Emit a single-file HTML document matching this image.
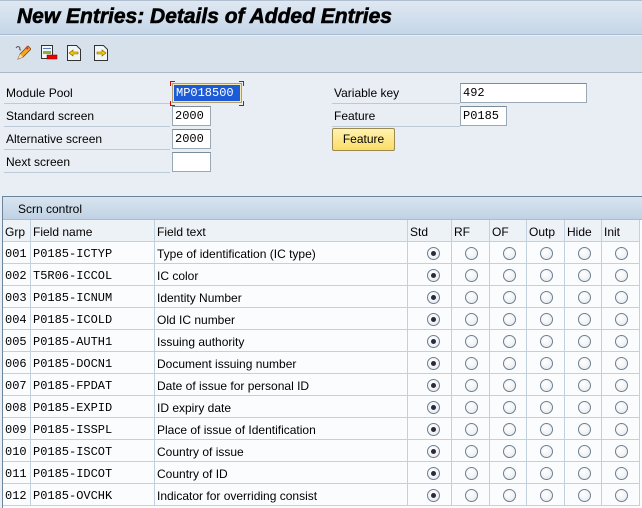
<!DOCTYPE html>
<html><head><meta charset="utf-8"><style>
*{margin:0;padding:0;box-sizing:border-box}
body{width:642px;height:508px;overflow:hidden;background:#e9eef5;font-family:"Liberation Sans",Tahoma,sans-serif;font-size:12px;color:#000;position:relative}
.a{position:absolute}
.title{left:0;top:0;width:642px;height:35px;background:linear-gradient(#dfe8f2,#c5d6e8);border-top:1px solid #b0c0d0;border-bottom:1px solid #a8bcd2}
.title span{position:absolute;left:17px;top:4px;font-size:21px;font-weight:900;font-style:italic;letter-spacing:0;-webkit-text-stroke:0.6px #000}
.tb{left:0;top:36px;width:642px;height:37px;background:#d6e1ec;border-bottom:1px solid #a9b9c9}
.lbl{position:absolute;height:22px;line-height:22px;padding-left:2px;border-bottom:1px solid #bccad8}
.inp{position:absolute;height:20px;background:#fff;border:1px solid #9aa8b6;border-top-color:#7d8b99;font-family:"Liberation Mono",monospace;font-size:12px;line-height:18px;padding-left:2px}
.btn{position:absolute;left:332px;top:128px;width:63px;height:23px;background:linear-gradient(#fff3b0,#fbdc66);border:1px solid #9a8a50;border-radius:2px;text-align:center;line-height:21px}
.grid{left:2px;top:196px;width:640px;height:312px;border-left:1px solid #6d859c;border-top:1px solid #6d859c;background:#fbfcfe}
.hd{left:3px;top:197px;width:639px;height:23px;background:linear-gradient(#d9e5f0,#bfd2e4);border-bottom:1px solid #a9bccf}
.cell{position:absolute;height:22px;line-height:22px;padding-left:2px;border-right:1px solid #c3d0dd;border-bottom:1px solid #c3d0dd;white-space:nowrap;overflow:hidden}
.ch{background:#edf2f7}
.m{font-family:"Liberation Mono",monospace;font-size:12px}
.r{position:absolute;width:13px;height:13px;border-radius:50%;border:1px solid #6f7f8f;background:radial-gradient(circle at 40% 35%,#fff,#e4e9ee)}
.r.on::after{content:"";position:absolute;left:3px;top:3px;width:5px;height:5px;border-radius:50%;background:#2a2a3a}
.k{position:absolute;width:5px;height:5px;border-color:#d00;border-style:solid;border-width:0}
</style></head><body>
<div class="a title"><span>New Entries: Details of Added Entries</span></div>
<div class="a tb">
<svg class="a" style="left:13px;top:8px" width="18" height="18" viewBox="0 0 18 18"><path d="M3 4 q2-3 4 0 q-1 2 1 2" stroke="#555" fill="none"/><path d="M5 15 l2-5 8-8 3 3-8 8z" fill="#f5a623" stroke="#7a4a10" stroke-width="0.8"/><path d="M5 15 l2-5 3 3z" fill="#f7e0b0"/><path d="M13 3 l2 2" stroke="#d33" stroke-width="2"/></svg>
<svg class="a" style="left:40px;top:8px" width="18" height="18" viewBox="0 0 18 18"><rect x="1.5" y="1.5" width="11" height="13" fill="#f4f6f8" stroke="#333"/><rect x="3" y="4" width="8" height="1" fill="#5a7ab0"/><rect x="3" y="7" width="8" height="3" fill="#8ab040"/><rect x="7" y="11" width="10" height="4" fill="#e00" stroke="#700" stroke-width="0.5"/></svg>
<svg class="a" style="left:66px;top:8px" width="16" height="18" viewBox="0 0 16 18"><path d="M1.5 1.5h9l4 4v11h-13z" fill="#f2f4f6" stroke="#333"/><path d="M3 9l4-3v2h5v2h-5v2z" fill="#f0d000" stroke="#806000" stroke-width="0.6"/></svg>
<svg class="a" style="left:93px;top:8px" width="16" height="18" viewBox="0 0 16 18"><path d="M1.5 1.5h9l4 4v11h-13z" fill="#f2f4f6" stroke="#333"/><path d="M13 9l-4-3v2h-5v2h5v2z" fill="#f0d000" stroke="#806000" stroke-width="0.6"/></svg>
</div>

<div class="lbl" style="left:4px;top:82px;width:166px">Module Pool</div>
<div class="lbl" style="left:4px;top:105px;width:166px">Standard screen</div>
<div class="lbl" style="left:4px;top:128px;width:166px">Alternative screen</div>
<div class="lbl" style="left:4px;top:151px;width:166px">Next screen</div>
<div class="k" style="left:170px;top:81px;border-left-width:1px;border-top-width:1px"></div>
<div class="k" style="left:239px;top:81px;border-right-width:1px;border-top-width:1px"></div>
<div class="k" style="left:170px;top:101px;border-left-width:1px;border-bottom-width:1px"></div>
<div class="k" style="left:239px;top:101px;border-right-width:1px;border-bottom-width:1px"></div>
<div class="inp" style="left:172px;top:83px;width:70px;background:#f5e8b0;border-color:#b0a070;padding:1px"><div style="background:#1c5ad8;color:#fff;height:16px;line-height:16px;padding-left:2px">MP018500</div></div>
<div class="inp" style="left:172px;top:106px;width:39px">2000</div>
<div class="inp" style="left:172px;top:129px;width:39px">2000</div>
<div class="inp" style="left:172px;top:152px;width:39px"></div>

<div class="lbl" style="left:332px;top:82px;width:128px">Variable key</div>
<div class="lbl" style="left:332px;top:105px;width:128px">Feature</div>
<div class="inp" style="left:460px;top:83px;width:127px">492</div>
<div class="inp" style="left:460px;top:106px;width:47px">P0185</div>
<div class="btn">Feature</div>

<div class="a grid"></div>
<div class="a hd"><span style="position:absolute;left:15px;top:5px">Scrn control</span></div>
<div id="t"></div>
<script>
var cols=[[3,28],[31,124],[155,253],[408,44],[452,38],[490,37],[527,38],[565,37],[602,38]];
var hdr=["Grp","Field name","Field text","Std","RF","OF","Outp","Hide","Init"];
var rows=[["001","P0185-ICTYP","Type of identification (IC type)"],["002","T5R06-ICCOL","IC color"],["003","P0185-ICNUM","Identity Number"],["004","P0185-ICOLD","Old IC number"],["005","P0185-AUTH1","Issuing authority"],["006","P0185-DOCN1","Document issuing number"],["007","P0185-FPDAT","Date of issue for personal ID"],["008","P0185-EXPID","ID expiry date"],["009","P0185-ISSPL","Place of issue of Identification"],["010","P0185-ISCOT","Country of issue"],["011","P0185-IDCOT","Country of ID"],["012","P0185-OVCHK","Indicator for overriding consist"]];
var h="";
for(var i=0;i<9;i++)h+='<div class="cell ch" style="left:'+cols[i][0]+'px;top:220px;width:'+cols[i][1]+'px;padding-top:1px">'+hdr[i]+'</div>';
for(var r=0;r<12;r++){var y=242+r*22;
 for(var i=0;i<9;i++){var c=i<3?rows[r][i]:"";
  h+='<div class="cell'+(i<2?' m':'')+'" style="left:'+cols[i][0]+'px;top:'+y+'px;width:'+cols[i][1]+'px;padding-top:1px">'+c+'</div>';
  if(i>=3){var cx=cols[i][0]+cols[i][1]/2;h+='<div class="r'+(i==3?' on':'')+'" style="left:'+(cx-6+(i==3?3:0))+'px;top:'+(y+5)+'px"></div>';}
 }}
document.getElementById("t").innerHTML=h;
</script>
</body></html>
